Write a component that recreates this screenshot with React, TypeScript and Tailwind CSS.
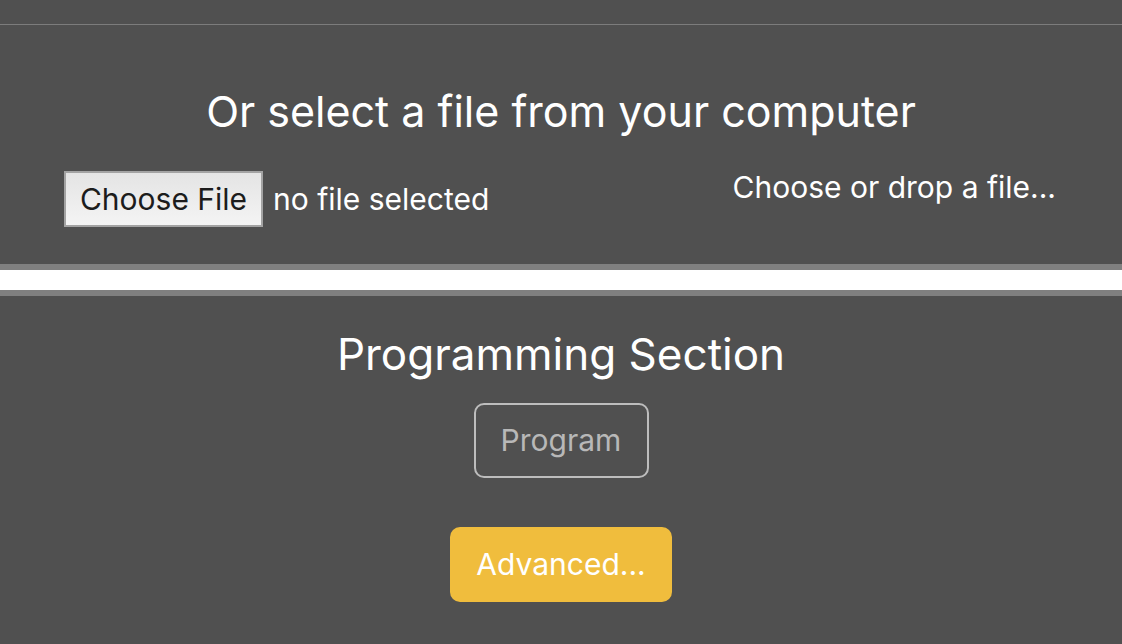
export default function App() {
  return (
    <div className="min-h-screen bg-[#505050] font-['Inter',sans-serif] text-white">
      {/* top strip */}
      <div className="h-[25px] border-b border-[#7c7c7c]" />

      {/* file select */}
      <div className="pt-[60px] h-[239px]">
        <h2 className="text-center text-[43px] leading-[52px]">Or select a file from your computer</h2>
        <div className="mt-[30px] flex items-start justify-between px-[64px]">
          <div className="mt-[4px] flex items-center gap-[10px]">
            <button className="h-[56px] w-[199px] border-2 border-[#a3a3a3] bg-gradient-to-b from-[#e4e4e4] to-[#f4f4f4] text-[30px] text-[#1c1c1c]">
              Choose File
            </button>
            <span className="text-[30px]">no file selected</span>
          </div>
          <span className="pr-[2px] text-[30px] leading-[40px]">Choose or drop a file...</span>
        </div>
      </div>

      {/* divider */}
      <div className="h-[6px] bg-[#808080]" />
      <div className="h-[20px] bg-white" />
      <div className="h-[6px] bg-[#808080]" />

      {/* programming */}
      <div className="flex flex-col items-center pt-[32px]">
        <h2 className="text-[44px] leading-[52px]">Programming Section</h2>
        <button className="mt-[23px] h-[75px] w-[175px] rounded-[10px] border-2 border-[#bdbdbd] text-[30px] text-[#b8b8b8]">
          Program
        </button>
        <button className="mt-[49px] h-[75px] w-[222px] rounded-[10px] bg-[#f0bd3d] text-[30px] text-white">
          Advanced...
        </button>
      </div>
    </div>
  );
}
